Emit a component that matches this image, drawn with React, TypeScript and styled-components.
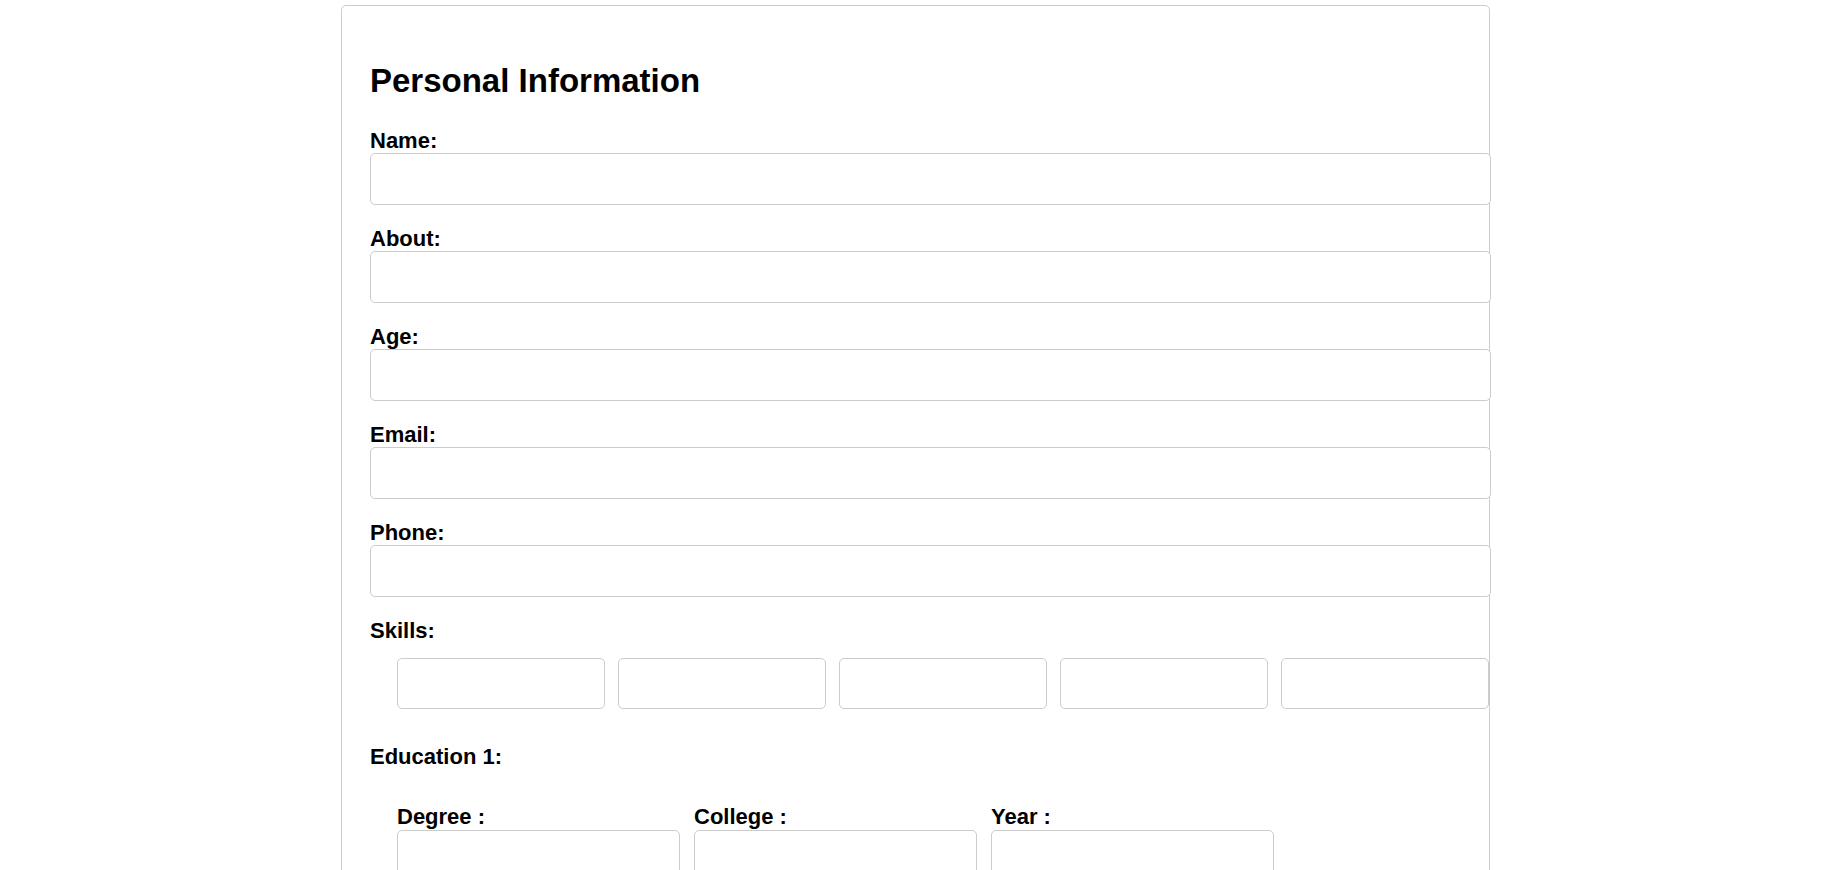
import React from "react";
import styled, { createGlobalStyle } from "styled-components";

const GlobalStyle = createGlobalStyle`
  html, body {
    margin: 0;
    padding: 0;
    background: #ffffff;
  }
  body {
    font-family: "Liberation Sans", Arial, sans-serif;
    color: #000;
  }
`;

const Page = styled.main`
  padding: 5px 2px 0 0;
`;

const Card = styled.form`
  box-sizing: border-box;
  width: 1149px;
  margin: 0 auto;
  padding: 28px 28px 28px;
  border: 1px solid #cccccc;
  border-radius: 5px;
  background: #fff;
`;

const Title = styled.h2`
  margin: 28px 0 28px;
  font-size: 33px;
  line-height: 38px;
  font-weight: 700;
`;

const Label = styled.label<{ $gapBelow?: number }>`
  display: block;
  font-size: 22px;
  line-height: 25px;
  font-weight: 700;
  margin-bottom: ${(p) => p.$gapBelow ?? 0}px;
`;

const Field = styled.div`
  margin-bottom: 21px;
`;

const TextInput = styled.input`
  display: block;
  box-sizing: border-box;
  width: calc(100% + 30px);
  height: 52px;
  padding: 15px;
  border: 1px solid #cccccc;
  border-radius: 5px;
  font-family: inherit;
  font-size: 16px;
  background: #fff;
  outline: none;
`;

const SkillsRow = styled.div`
  display: flex;
  gap: 13px;
  margin: 15px 0 35px;
  padding-left: 27px;
`;

const BoxInput = styled.input<{ $w: number; $h: number }>`
  box-sizing: border-box;
  flex: none;
  width: ${(p) => p.$w}px;
  height: ${(p) => p.$h}px;
  padding: 15px;
  border: 1px solid #cccccc;
  border-radius: 5px;
  font-family: inherit;
  font-size: 16px;
  background: #fff;
  outline: none;
`;

const EduBlock = styled.div`
  margin-bottom: 28px;
`;

const EduRow = styled.div`
  display: grid;
  grid-template-columns: repeat(3, 283px);
  column-gap: 14px;
  margin-top: 35px;
  padding-left: 27px;
`;

const EduField = styled.div`
  display: flex;
  flex-direction: column;
`;

const fields = ["Name:", "About:", "Age:", "Email:", "Phone:"];
const eduFields = ["Degree :", "College :", "Year :"];

export default function App() {
  return (
    <Page>
      <GlobalStyle />
      <Card onSubmit={(e) => e.preventDefault()}>
        <Title>Personal Information</Title>
        {fields.map((f) => (
          <Field key={f}>
            <Label>{f}</Label>
            <TextInput type="text" />
          </Field>
        ))}
        <Label>Skills:</Label>
        <SkillsRow>
          {[0, 1, 2, 3, 4].map((i) => (
            <BoxInput key={i} type="text" $w={208} $h={51} />
          ))}
        </SkillsRow>
        <EduBlock>
          <Label>Education 1:</Label>
          <EduRow>
            {eduFields.map((f) => (
              <EduField key={f}>
                <Label $gapBelow={1}>{f}</Label>
                <BoxInput type="text" $w={283} $h={52} />
              </EduField>
            ))}
          </EduRow>
        </EduBlock>
      </Card>
    </Page>
  );
}
